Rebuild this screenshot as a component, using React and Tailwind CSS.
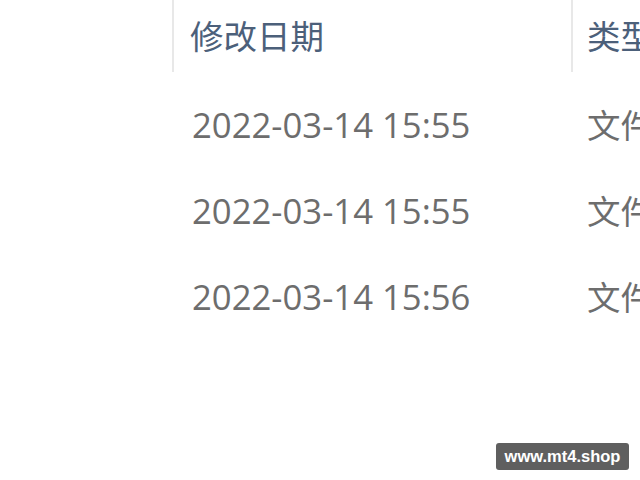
import React from 'react';

const rows = [
  { date: '2022-03-14 15:55', type: '文件夹' },
  { date: '2022-03-14 15:55', type: '文件夹' },
  { date: '2022-03-14 15:56', type: '文件夹' },
];

const cjk = { fontFamily: '"Segoe UI", "Open Sans", "Noto Sans CJK SC", sans-serif' };

export default function App() {
  return (
    <div className="relative w-[640px] h-[480px] overflow-hidden bg-white" style={cjk}>
      <div className="flex h-[72px] whitespace-nowrap">
        <div className="w-[174px] shrink-0 border-r-2 border-[#e8e8e8]" />
        <div className="w-[399px] shrink-0 border-r-2 border-[#e8e8e8] pl-[16px] flex items-center text-[33.5px] text-[#4c607a]">
          修改日期
        </div>
        <div className="pl-[14px] flex items-center text-[33.5px] text-[#4c607a]">类型</div>
      </div>

      <div className="pt-[10px]">
        {rows.map((r, i) => (
          <div key={i} className="flex h-[86px] items-center whitespace-nowrap text-[#6d6d6d]">
            <div className="w-[174px] shrink-0" />
            <div className="w-[399px] shrink-0 pl-[18px] text-[34.7px]">{r.date}</div>
            <div className="pl-[14px] text-[33.5px]">{r.type}</div>
          </div>
        ))}
      </div>

      <div
        className="absolute right-[11px] bottom-[10px] w-[133px] h-[27px] rounded-[3px] bg-[#5f5f5f] flex items-center justify-center text-white text-[16.5px] font-bold"
        style={{ fontFamily: '"Liberation Sans", Arial, sans-serif' }}
      >
        www.mt4.shop
      </div>
    </div>
  );
}
